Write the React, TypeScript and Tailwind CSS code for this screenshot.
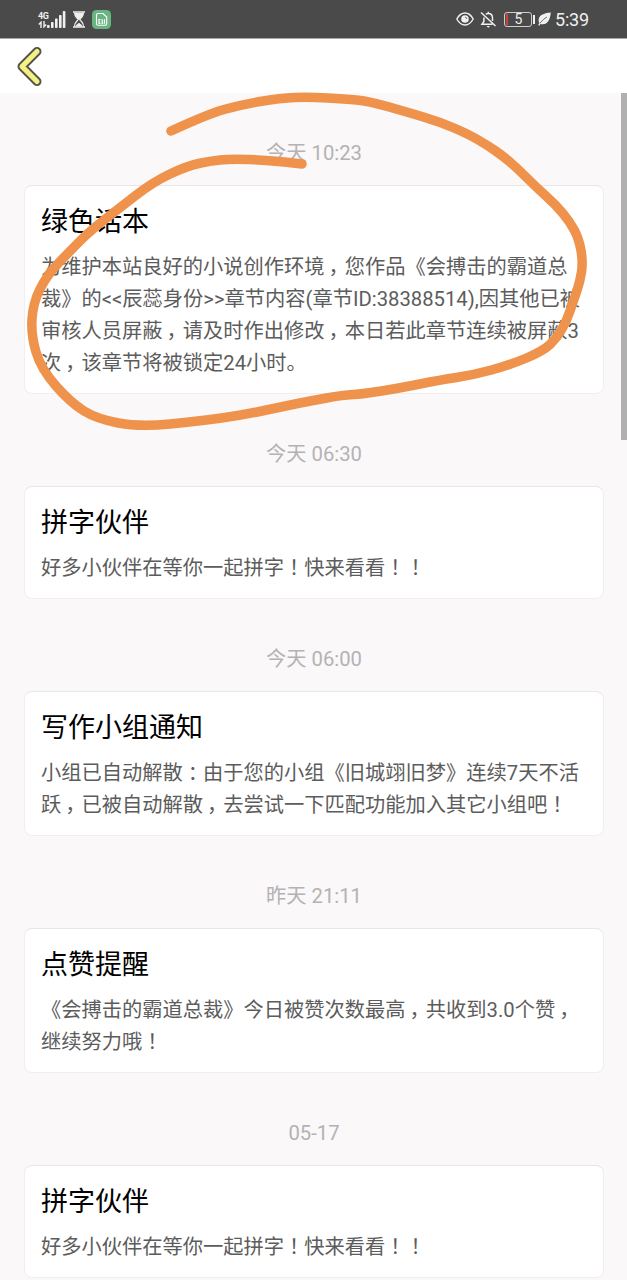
import { Fragment } from "react";

type Message = {
    time: string;
    title: string;
    lines: string[];
};

const messages: Message[] = [
    {
        time: "今天 10:23",
        title: "绿色话本",
        lines: [
            "为维护本站良好的小说创作环境，您作品《会搏击的霸道总",
            "裁》的<<辰蕊身份>>章节内容(章节ID:38388514),因其他已被",
            "审核人员屏蔽，请及时作出修改，本日若此章节连续被屏蔽3",
            "次，该章节将被锁定24小时。",
        ],
    },
    {
        time: "今天 06:30",
        title: "拼字伙伴",
        lines: ["好多小伙伴在等你一起拼字！快来看看！！"],
    },
    {
        time: "今天 06:00",
        title: "写作小组通知",
        lines: [
            "小组已自动解散：由于您的小组《旧城翊旧梦》连续7天不活",
            "跃，已被自动解散，去尝试一下匹配功能加入其它小组吧！",
        ],
    },
    {
        time: "昨天 21:11",
        title: "点赞提醒",
        lines: [
            "《会搏击的霸道总裁》今日被赞次数最高，共收到3.0个赞，",
            "继续努力哦！",
        ],
    },
    {
        time: "05-17",
        title: "拼字伙伴",
        lines: ["好多小伙伴在等你一起拼字！快来看看！！"],
    },
];

const strokePoints = [
    [171, 131], [208, 114], [240, 105], [280, 98], [310, 97], [345, 99],
    [368, 101], [407, 112], [440, 122], [468, 134], [487, 145], [503, 156],
    [518, 169], [536, 187], [556, 205], [570, 222], [579, 239], [583, 262],
    [580, 282], [573, 302], [567, 320], [557, 338], [543, 351], [510, 365],
    [473, 375], [440, 380], [400, 388], [363, 394], [343, 395], [310, 401],
    [290, 405], [243, 415], [200, 421], [140, 427], [97, 419], [71, 403],
    [41, 369], [31, 335], [33, 303], [47, 275], [72, 249], [90, 231],
    [117, 210], [153, 182], [187, 166], [210, 161], [230, 159], [267, 160],
    [302, 164],
];

// Runs quadratic curves through the midpoints so the line reads as hand drawn
function smoothPath(points: number[][]) {
    let d = `M${points[0][0]} ${points[0][1]}`;
    for (let i = 1; i < points.length - 1; i++) {
        const [x, y] = points[i];
        const [nx, ny] = points[i + 1];
        d += ` Q${x} ${y} ${(x + nx) / 2} ${(y + ny) / 2}`;
    }
    const last = points[points.length - 1];
    return `${d} L${last[0]} ${last[1]}`;
}

function StatusBar() {
    return (
        <div className="flex h-[39px] items-center justify-between border-b border-[#a5a5a5] bg-[#4a4a4a] pl-[38px] pr-[36px] text-[#f0f0f0]">
            <div className="flex items-center">
                <div className="flex h-[18px] w-[28px] items-end">
                    <div className="flex w-[9px] shrink-0 flex-col">
                        <span className="text-[9px] font-bold leading-[10px] tracking-[-0.5px]">
                            4G
                        </span>
                        <svg width="9" height="7" viewBox="0 0 9 7" fill="none" stroke="currentColor" strokeWidth="1.4">
                            <path d="M3 7V1.2L.8 3.4M6 0v5.8l2.2-2.2" />
                        </svg>
                    </div>
                    <svg className="shrink-0" width="19" height="17" viewBox="0 0 19 17" fill="currentColor">
                        <rect x="0" y="14" width="2.6" height="3" rx=".8" />
                        <rect x="4" y="11" width="2.6" height="6" rx=".8" />
                        <rect x="8" y="7.5" width="2.6" height="9.5" rx=".8" />
                        <rect x="12" y="4" width="2.6" height="13" rx=".8" />
                        <rect x="15.8" y="0" width="2.6" height="17" rx=".8" />
                    </svg>
                </div>
                <svg className="ml-[7px]" width="12" height="17" viewBox="0 0 12 17" fill="none" stroke="currentColor">
                    <path d="M0 1h12M0 16h12" strokeWidth="1.6" />
                    <path d="M1.5 1.5C1.5 6 4 6.5 5.3 8.5C4 10.5 1.5 11 1.5 15.5M10.5 1.5C10.5 6 8 6.5 6.7 8.5C8 10.5 10.5 11 10.5 15.5" strokeWidth="1.2" />
                    <path d="M1.5 2h9C10 5.5 8 6.5 6 8.8C4 6.5 2 5.5 1.5 2zM2.5 15.5C3 13.5 5 13 6 11.8C7 13 9 13.5 9.5 15.5z" fill="currentColor" stroke="none" />
                </svg>
                <svg className="ml-[7px]" width="19" height="19" viewBox="0 0 19 19" fill="none">
                    <rect width="19" height="19" rx="4.5" fill="#68b482" />
                    <path d="M6 3.5h5l3.7 3.6v6.7c0 1-.5 1.5-1.5 1.5H6c-1 0-1.5-.5-1.5-1.5V5c0-1 .5-1.5 1.5-1.5z" stroke="#fff" strokeWidth="1.1" />
                    <path d="M7 9.2v4.6M6.4 9.5h2.1M6.4 13.4h2.1M10.2 9.2v4.6M12.5 9.2v4.6M9.6 13.4h1.6" stroke="#fff" strokeWidth="1.2" />
                </svg>
            </div>
            <div className="flex items-center">
                <svg width="18" height="14" viewBox="0 0 18 14" fill="none" stroke="currentColor" strokeWidth="1.4">
                    <path d="M.8 7C3 3 5.8 1 9 1s6 2 8.2 6C15 11 12.2 13 9 13S3 11 .8 7z" />
                    <circle cx="9" cy="7" r="3.8" fill="currentColor" stroke="none" />
                    <path d="M9.2 5.2a1.8 1.8 0 0 1 1.6 1.6" stroke="#4a4a4a" strokeWidth=".9" />
                </svg>
                <svg className="ml-[6px]" width="17" height="17" viewBox="0 0 17 17" fill="none" stroke="currentColor" strokeWidth="1.5">
                    <path d="M1 1.5L15.5 15M5.8 3.3C6.5 2.7 7.3 2.5 8.3 2.5C11 2.5 12.5 4.500 12.5 7v3M3.900 6.500V10.500L2 13.200h10.500M8.300 2.500V.8" />
                    <path d="M6.500 15h3.600l-1.800 1.800z" fill="currentColor" stroke="none" />
                </svg>
                <div className="ml-[7px] flex h-[15px] w-[28px] items-center justify-center rounded-[3px] border border-[#d0cdca] pl-px text-[14px] leading-none">
                    <span className="h-[11px] w-[2px] bg-[#c9453a]" />
                    <span className="flex-1 pr-[2px] text-center">5</span>
                </div>
                <span className="ml-px h-[9px] w-[2px] bg-[#f0f0f0]" />
                <svg className="ml-[3px]" width="13" height="14" viewBox="0 0 13 14" fill="currentColor">
                    <path d="M12.8.5C7 1 1 2.5.6 8c0 1.3.2 2 .7 2.9L.2 13l1 .7 1.3-1.6C9.5 13.5 12 8 12.8.5z" />
                    <path d="M2 11.2C4 8.5 6.5 6.5 9 5" stroke="#4a4a4a" strokeWidth=".8" fill="none" />
                </svg>
                <span className="ml-[4px] w-[36px] whitespace-nowrap pt-[2px] text-[18px] leading-none tracking-[-0.2px]">
                    5:39
                </span>
            </div>
        </div>
    );
}

// ，！： sit in the middle of their cell: the margin moves the mark right
// and the tracking takes the same width back
function TextLine({ text }: { text: string }) {
    return (
        <p className="h-8 whitespace-nowrap">
            {text.split(/([，！：])/).map((part, i) => {
                if (part === "，") {
                    return (
                        <span key={i} className="ml-[4px] tracking-[-4px]">
                            {part}
                        </span>
                    );
                }
                if (part === "！" || part === "：") {
                    return (
                        <span key={i} className="ml-[5px] tracking-[-5px]">
                            {part}
                        </span>
                    );
                }
                return <Fragment key={i}>{part}</Fragment>;
            })}
        </p>
    );
}

function MessageItem({ message }: { message: Message }) {
    return (
        <section>
            <div className="h-[92px] pt-12 text-center text-[20.25px] leading-6 text-[#b4b2b3]">
                {message.time}
            </div>
            <div className="rounded-lg border border-[#f0eeef] border-t-[#e8e6e7] bg-white px-4 pb-[14px] pt-[17px]">
                <h2 className="text-[27px] leading-[39px] text-black">{message.title}</h2>
                <div className="mt-[9px] text-[20.25px] leading-8 text-[#5c5c5c]">
                    {message.lines.map((line) => (
                        <TextLine key={line} text={line} />
                    ))}
                </div>
            </div>
        </section>
    );
}

function App() {
    return (
        <div className="relative flex h-[1280px] w-[627px] flex-col overflow-hidden bg-[#faf8f9] font-[Roboto,'Noto_Sans_CJK_SC',sans-serif] [text-spacing-trim:space-all]">
            <StatusBar />
            <header className="flex h-[54px] shrink-0 items-center bg-white pl-[16px]">
                <svg width="28" height="42" viewBox="0 0 28 42" fill="none" strokeLinecap="round" strokeLinejoin="round">
                    <path d="M21 6.5L6 21.5L21 36.5" stroke="#55524a" strokeWidth="9" />
                    <path d="M21 6.5L6 21.5L21 36.5" stroke="#f3f184" strokeWidth="5.2" />
                </svg>
            </header>
            <main className="flex min-h-0 flex-1 justify-between pl-6">
                <div className="w-[580px]">
                    {messages.map((message) => (
                        <MessageItem key={message.time} message={message} />
                    ))}
                </div>
                <div className="h-[347px] w-[6px] bg-[#b1b0b1]" />
            </main>
            <svg
                className="pointer-events-none absolute left-0 top-0"
                width="627"
                height="1280"
                viewBox="0 0 627 1280"
                fill="none"
            >
                <path
                    d={smoothPath(strokePoints)}
                    stroke="#ef924b"
                    strokeWidth="9.5"
                    strokeLinecap="round"
                    strokeLinejoin="round"
                />
            </svg>
        </div>
    );
}

export default App;
